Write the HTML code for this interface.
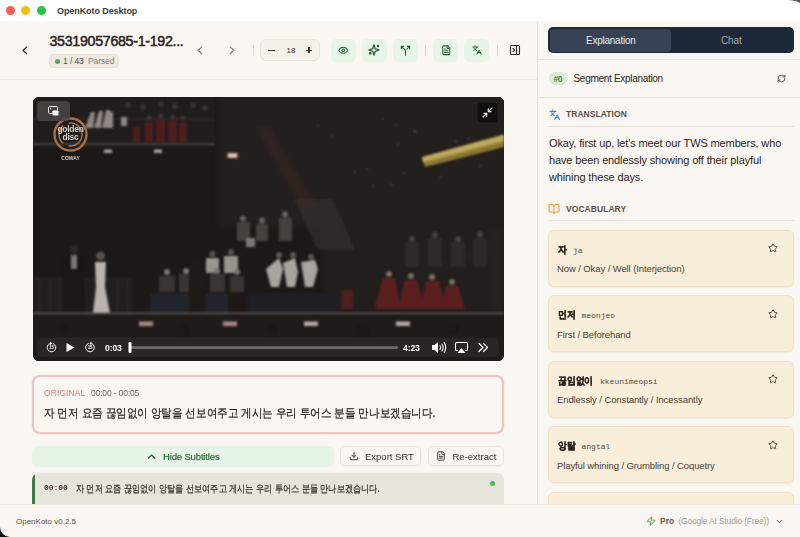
<!DOCTYPE html>
<html><head><meta charset="utf-8">
<style>
*{box-sizing:border-box;margin:0;padding:0}
html,body{width:800px;height:537px;overflow:hidden;background:#faf7f2}
body{font-family:"Liberation Sans",sans-serif;color:#2b2521;position:relative}
.a{position:absolute}
.nw{white-space:nowrap}
svg{display:block;overflow:visible}
.titlebar{left:0;top:0;width:800px;height:22px;background:linear-gradient(#fff 0,#fff 20px,#fcfbf8 21px,#faf7f2 22px)}
.tl{top:6px;width:9px;height:9px;border-radius:50%}
.title{left:57px;top:6px;font-size:9px;font-weight:bold;color:#3b3b3b;letter-spacing:-0.08px}
.bd{background:#e8e3db}
.gbtn{top:39px;width:25px;height:23px;border-radius:5px;background:#e6f5e8}
.gbtn svg{position:absolute;left:6.5px;top:5.5px}
.sep{top:45px;width:1px;height:11px;background:#dcd6ce}
.card{left:548px;width:246px;height:57px;background:#f9eed9;border:1px solid #f0e1c8;box-shadow:0 1px 1.5px rgba(120,90,40,0.08);border-radius:6px}
.kw{left:9px;top:12.2px;font-size:10px;font-weight:bold;color:#2a211c;-webkit-text-stroke:0.3px #2a211c;transform:scaleX(0.88);transform-origin:0 0}
.rom{top:15.2px;font-family:"Liberation Mono",monospace;font-size:8px;color:#544a44}
.mean{left:8px;top:32.7px;font-size:9.5px;color:#4a3f38;letter-spacing:-0.1px}
.star{left:218.6px;top:12.6px}
.sech{font-size:8.5px;font-weight:bold;color:#5e4e44;letter-spacing:0.05px}
</style></head><body>

<!-- title bar -->
<div class="a titlebar">
  <div class="a tl" style="left:6px;background:#f45b5d"></div>
  <div class="a tl" style="left:21px;background:#f6bf15"></div>
  <div class="a tl" style="left:37px;background:#27c444"></div>
  <div class="a title nw">OpenKoto Desktop</div>
</div>

<!-- header -->
<svg class="a" style="left:21px;top:45px" width="8" height="11" viewBox="0 0 8 11"><path d="M5.5 2.3 L2 5.4 L5.5 8.5" fill="none" stroke="#2e2a27" stroke-width="1.3" stroke-linecap="round" stroke-linejoin="round"/></svg>
<div class="a nw" style="left:49.5px;top:33.2px;font-size:14.2px;color:#2a2320;letter-spacing:-0.28px;-webkit-text-stroke:0.5px #2a2320">35319057685-1-192...</div>
<div class="a" style="left:49px;top:54px;width:70px;height:14px;border-radius:4px;background:#efe9e1;border:1px solid #e8e1d7"></div>
<div class="a" style="left:55px;top:59px;width:5px;height:5px;border-radius:50%;background:#5fa46a"></div>
<div class="a nw" style="left:63px;top:56px;font-size:8.5px;color:#5a5048;letter-spacing:-0.1px">1 / 43 <span style="color:#8a8078;margin-left:2px">Parsed</span></div>

<svg class="a" style="left:196px;top:45px" width="8" height="11" viewBox="0 0 8 11"><path d="M5.6 2.1 L2.1 5.3 L5.6 8.5" fill="none" stroke="#857d76" stroke-width="1.2" stroke-linecap="round" stroke-linejoin="round"/></svg>
<svg class="a" style="left:228px;top:45px" width="8" height="11" viewBox="0 0 8 11"><path d="M2.2 2.1 L5.7 5.3 L2.2 8.5" fill="none" stroke="#857d76" stroke-width="1.2" stroke-linecap="round" stroke-linejoin="round"/></svg>
<div class="a sep" style="left:253px"></div>

<div class="a" style="left:260px;top:39.2px;width:59.6px;height:22px;border-radius:6px;background:#f4f0ea;border:1px solid #e8e2d9"></div>
<div class="a" style="left:268.3px;top:49.7px;width:6.5px;height:1.2px;background:#3e3631"></div>
<div class="a nw" style="left:286.6px;top:45.5px;font-size:8px;color:#3e3631;letter-spacing:0px">18</div>
<div class="a" style="left:306px;top:49.7px;width:6px;height:1.2px;background:#3e3631"></div>
<div class="a" style="left:308.4px;top:47.2px;width:1.2px;height:6px;background:#3e3631"></div>

<div class="a gbtn" style="left:331px"><svg style="left:7.3px;top:6.3px" width="10.5" height="10.5" viewBox="0 0 24 24" fill="none" stroke="#2f5e35" stroke-width="2.4" stroke-linecap="round" stroke-linejoin="round"><path d="M2.062 12.348a1 1 0 0 1 0-.696 10.75 10.75 0 0 1 19.876 0 1 1 0 0 1 0 .696 10.75 10.75 0 0 1-19.876 0"/><circle cx="12" cy="12" r="3"/></svg></div>
<div class="a gbtn" style="left:362px"><svg style="left:6px;top:5.2px" width="12" height="12" viewBox="0 0 24 24" fill="none" stroke="#2f5e35" stroke-width="2.5" stroke-linecap="round" stroke-linejoin="round"><path d="M9.937 15.5A2 2 0 0 0 8.5 14.063l-6.135-1.582a.5.5 0 0 1 0-.962L8.5 9.936A2 2 0 0 0 9.937 8.5l1.582-6.135a.5.5 0 0 1 .963 0L14.063 8.5A2 2 0 0 0 15.5 9.937l6.135 1.581a.5.5 0 0 1 0 .964L15.5 14.063a2 2 0 0 0-1.437 1.437l-1.582 6.135a.5.5 0 0 1-.963 0z"/><circle cx="20" cy="4" r="1.3" fill="#2f5e35"/><circle cx="4.5" cy="18.5" r="1.5"/></svg></div>
<div class="a gbtn" style="left:393px"><svg style="left:7px;top:5.5px" width="11" height="11" viewBox="0 0 24 24" fill="none" stroke="#2f5e35" stroke-width="2.5" stroke-linecap="round" stroke-linejoin="round"><path d="M16 3h5v5"/><path d="M8 3H3v5"/><path d="M12 22v-8.3a4 4 0 0 0-1.172-2.872L3 3"/><path d="m15 9 6-6"/></svg></div>
<div class="a sep" style="left:425px"></div>
<div class="a gbtn" style="left:433px"><svg style="left:7.75px;top:5.65px" width="10.5" height="10.5" viewBox="0 0 24 24" fill="none" stroke="#2f5e35" stroke-width="2.4" stroke-linecap="round" stroke-linejoin="round"><path d="M15 2H6a2 2 0 0 0-2 2v16a2 2 0 0 0 2 2h12a2 2 0 0 0 2-2V7Z"/><path d="M14 2v4a2 2 0 0 0 2 2h4"/><path d="M10 9H8"/><path d="M16 13H8"/><path d="M16 17H8"/></svg></div>
<div class="a gbtn" style="left:464px"><svg style="left:8px;top:5.85px" width="10" height="10" viewBox="0 0 24 24" fill="none" stroke="#2f5e35" stroke-width="2.4" stroke-linecap="round" stroke-linejoin="round"><path d="m5 8 6 6"/><path d="m4 14 6-6 2-3"/><path d="M2 5h12"/><path d="M7 2h1"/><path d="m22 22-5-10-5 10"/><path d="M14 18h6"/></svg></div>
<div class="a sep" style="left:497px"></div>
<svg class="a" style="left:509px;top:44px" width="12" height="12" viewBox="0 0 24 24" fill="none" stroke="#2e2a27" stroke-width="2.2" stroke-linecap="round" stroke-linejoin="round"><rect width="18" height="18" x="3" y="3" rx="2"/><path d="M15 3v18"/><path d="m8 9 3 3-3 3"/></svg>

<div class="a bd" style="left:0;top:79px;width:537px;height:1px"></div>
<div class="a bd" style="left:537px;top:21px;width:1px;height:483px"></div>

<!-- VIDEO -->
<div class="a" style="left:33px;top:96.5px;width:471px;height:264px;border-radius:6px;overflow:hidden;background:#1c1816">
<svg width="471" height="264" viewBox="0 0 471 264">
  <defs>
    <filter id="bl" x="-5%" y="-5%" width="110%" height="110%" color-interpolation-filters="sRGB"><feGaussianBlur stdDeviation="0.9"/></filter>
    <filter id="bl2" x="-20%" y="-20%" width="140%" height="140%" color-interpolation-filters="sRGB"><feGaussianBlur stdDeviation="2.5"/></filter>
    <pattern id="dots" width="3" height="3" patternUnits="userSpaceOnUse"><rect width="3" height="3" fill="#2a2523"/><circle cx="1.5" cy="1.5" r="0.7" fill="#6b6460"/></pattern>
  </defs>
  <rect width="471" height="264" fill="#1c1816"/>
  <g filter="url(#bl2)">
    <rect x="185" y="-10" width="296" height="140" fill="#231f1c"/>
    <rect x="290" y="120" width="191" height="96" fill="#221e1b"/>
    <path d="M222 30 L236 30 L285 112 L270 112 Z" fill="#3a2622" opacity="0.55"/>
    <path d="M380 175 L471 140 L471 150 L390 185 Z" fill="#26211f" opacity="0.8"/>
  </g>
  <g filter="url(#bl)">
  <!-- balcony -->
  <rect x="0" y="0" width="182" height="47" fill="#201c1a"/>
  <g fill="#2e2927"><rect x="0" y="21" width="182" height="2"/></g>
  <g fill="#3a3431"><circle cx="8" cy="12" r="3"/><circle cx="20" cy="10" r="3"/><circle cx="95" cy="8" r="3"/><circle cx="110" cy="10" r="3"/><circle cx="128" cy="7" r="3"/><circle cx="142" cy="9" r="3"/><circle cx="160" cy="8" r="3"/><circle cx="172" cy="11" r="3"/></g>
  <g fill="#8f8883"><path d="M52 31 L58 15 L62 15 L60 31 Z"/><path d="M61 31 L66 14 L70 14 L68 31 Z"/><path d="M69 31 L73 13 L77 13 L76 31 Z"/><rect x="75" y="15" width="5" height="16"/><rect x="88" y="20" width="6" height="9"/></g>
  <g fill="#4e1d1e"><rect x="112" y="25" width="8" height="20"/><rect x="123" y="23" width="9" height="22"/><rect x="135" y="24" width="9" height="21"/><rect x="146" y="25" width="8" height="20"/><rect x="100" y="30" width="7" height="15"/></g>
  <g fill="#3e3835"><circle cx="116" cy="21" r="2.5"/><circle cx="127.5" cy="19" r="2.5"/><circle cx="139.5" cy="20" r="2.5"/><circle cx="150" cy="21" r="2.5"/></g>
  <rect x="0" y="46.5" width="182" height="1.4" fill="#5c5550"/>
  <!-- lights -->
  <rect x="71" y="52.5" width="8" height="3.5" fill="#aaa29c"/>
  <rect x="121" y="52.5" width="8" height="3.5" fill="#aaa29c"/>
  <rect x="193" y="55" width="13" height="7" fill="#7a3a28" opacity="0.7"/>
  <rect x="195" y="56.5" width="9" height="4" fill="#e0d6d0"/>
  <!-- dotted mesh -->
  <path d="M262 103 L300 103 L322 152 L284 152 Z" fill="url(#dots)" opacity="0.7"/>
  <!-- gold beam -->
  <path d="M389 60 L471 37.5 L471 50 L392 70 Z" fill="#8d7733"/>
  <path d="M389 60 L471 37.5 L471 44 L390 65.5 Z" fill="#bda85e"/>
  <g fill="#9d9791"><circle cx="285.2" cy="29.1" r="0.55"/><circle cx="299.0" cy="38.3" r="0.55"/><circle cx="349.5" cy="21.5" r="0.55"/><circle cx="363.3" cy="27.6" r="0.55"/><circle cx="381.7" cy="34.6" r="0.9"/><circle cx="364.8" cy="47.5" r="0.55"/><circle cx="423.0" cy="44.4" r="0.55"/><circle cx="334.2" cy="72.0" r="0.55"/><circle cx="321.9" cy="75.1" r="0.55"/><circle cx="371.0" cy="76.6" r="0.55"/><circle cx="407.7" cy="79.7" r="0.55"/><circle cx="435.3" cy="41.4" r="0.55"/><circle cx="447.5" cy="68.9" r="0.55"/><circle cx="358.7" cy="87.3" r="0.55"/><circle cx="340.3" cy="88.9" r="0.55"/></g>
  <!-- middle seated (upper) -->
  <g fill="#46413d"><rect x="204" y="125" width="13" height="19"/><rect x="223" y="127" width="12" height="17"/><rect x="246" y="121" width="13" height="23"/></g>
  <g fill="#6a635e"><circle cx="210" cy="121.5" r="3"/><circle cx="229" cy="123.5" r="3"/><circle cx="252" cy="117.5" r="3"/></g>
  <!-- right dark suits -->
  <g fill="#2e2a28"><rect x="372" y="145" width="14" height="25"/><rect x="395" y="141" width="14" height="29"/><rect x="418" y="145" width="14" height="25"/><rect x="440" y="140" width="14" height="30"/></g>
  <g fill="#4a4440"><circle cx="379" cy="142" r="3"/><circle cx="402" cy="138" r="3"/><circle cx="425" cy="142" r="3"/><circle cx="447" cy="137" r="3"/></g>
  <!-- railing -->
  <g fill="#221e1c"><rect x="0" y="181" width="100" height="35"/></g>
  <g fill="#302b28"><rect x="6" y="181" width="1.2" height="35"/><rect x="16" y="181" width="1.2" height="35"/><rect x="26" y="181" width="1.2" height="35"/><rect x="84" y="181" width="1.2" height="35"/><rect x="94" y="181" width="1.2" height="35"/><rect x="0" y="181" width="100" height="1.2"/></g>
  <!-- navy chairs -->
  <rect x="117" y="196" width="78" height="20" fill="#22242c"/>
  <rect x="215" y="196" width="92" height="20" fill="#1f1e24"/>
  <!-- white shirts second row -->
  <g fill="#9a948f"><rect x="173" y="161" width="13" height="15"/><rect x="191" y="159" width="14" height="17"/></g>
  <g fill="#5a5450"><circle cx="179.5" cy="157" r="3"/><circle cx="198" cy="155" r="3"/></g>
  <!-- seated women -->
  <g fill="#3a3532"><rect x="126" y="179" width="16" height="16"/><rect x="146" y="177" width="14" height="18"/><rect x="177" y="177" width="15" height="18"/><rect x="197" y="179" width="14" height="16"/></g>
  <g fill="#7d7570"><circle cx="134" cy="175" r="3"/><circle cx="153" cy="174" r="3"/><circle cx="184" cy="174" r="3"/><circle cx="204" cy="175" r="3"/></g>
  <!-- dark standing figure -->
  <rect x="156" y="162" width="17" height="54" fill="#1d1917"/>
  <!-- white suits -->
  <g fill="#aaa49f"><path d="M233 172 L246 161 L250 172 L246 190 L238 190 Z"/><path d="M250 166 L262 161 L265 175 L262 190 L254 190 Z"/><path d="M268 165 L282 163 L285 172 L280 190 L272 190 Z"/></g>
  <g fill="#5e5854"><circle cx="246" cy="158" r="3"/><circle cx="260" cy="158" r="3"/><circle cx="278" cy="160" r="3"/></g>
  <rect x="213" y="141" width="9" height="9" fill="#7e7873"/>
  <!-- red group -->
  <g fill="#5c1f20"><path d="M343 206 L350 181 L362 181 L368 212 L343 212 Z"/><path d="M365 212 L372 183 L384 183 L392 212 Z"/><path d="M386 212 L393 184 L406 184 L414 212 Z"/><path d="M408 212 L413 189 L425 189 L432 212 Z"/></g>
  <g fill="#7a6e68"><circle cx="356" cy="177" r="3"/><circle cx="378" cy="179" r="3"/><circle cx="399" cy="180" r="3"/><circle cx="419" cy="185" r="3"/></g>
  <rect x="308" y="193" width="12" height="19" fill="#4e1f20"/>
  <!-- hosts -->
  <path d="M31 160 L50 160 L52 216 L30 216 Z" fill="#1a1614"/>
  <rect x="38" y="158" width="6" height="14" fill="#7a746f"/>
  <circle cx="41" cy="152" r="4" fill="#2e2926"/>
  <path d="M62 165 L73 165 L72 190 L77 216 L60 216 L63 190 Z" fill="#bab3ae"/>
  <circle cx="67.5" cy="159" r="4.5" fill="#5a524d"/>
  <!-- right column -->
  <rect x="456" y="130" width="15" height="86" fill="#24201e"/>
  <!-- stage edge -->
  <rect x="0" y="215.5" width="471" height="1.8" fill="#625c57"/>
  <rect x="0" y="217.3" width="471" height="47" fill="#1f1b19"/>
  <g fill="#1c1816" opacity="0.7"><circle cx="30" cy="232" r="6"/><circle cx="150" cy="234" r="7"/><circle cx="240" cy="233" r="6"/><circle cx="330" cy="234" r="7"/><circle cx="420" cy="232" r="6"/></g>
  <rect x="106" y="224.5" width="14" height="4.5" fill="#a58a84"/>
  <rect x="190" y="224.5" width="14" height="4.5" fill="#a58a84"/>
  <rect x="271" y="224.5" width="14" height="4.5" fill="#b5aaa4"/>
  <rect x="363" y="224.5" width="14" height="4.5" fill="#b5aaa4"/>
  </g>
  <!-- logo -->
  <g fill="none" stroke="#a3714a"><circle cx="37.5" cy="37.5" r="16" stroke-width="2.4"/><circle cx="37.5" cy="37.5" r="11.5" stroke-width="1.5" stroke-dasharray="20 6"/></g>
  <text x="37.5" y="35" font-family="Liberation Sans" font-size="8.5" font-weight="bold" fill="#d8d2cc" text-anchor="middle" letter-spacing="-0.3">golden</text>
  <text x="37.5" y="43" font-family="Liberation Sans" font-size="8.5" font-weight="bold" fill="#d8d2cc" text-anchor="middle" letter-spacing="-0.3">disc</text>
  <text x="37.5" y="63" font-family="Liberation Sans" font-size="5" font-weight="bold" fill="#cfcac5" text-anchor="middle">COWAY</text>
  <!-- control bar -->
  <rect x="4" y="240.5" width="462" height="19.5" rx="6" fill="#2b2725" opacity="0.9"/>
  <g fill="none" stroke="#f4f4f4" stroke-width="1">
    <path d="M17.2 246.4 A4.3 4.3 0 1 0 19.8 246.4"/>
    <path d="M55.7 246.4 A4.3 4.3 0 1 0 58.3 246.4"/>
  </g>
  <path d="M17 244.6 L19.2 246.4 L17 248.2 Z" fill="#f4f4f4"/>
  <path d="M58.5 244.6 L56.3 246.4 L58.5 248.2 Z" fill="#f4f4f4"/>
  <text x="18.5" y="252.4" font-family="Liberation Sans" font-size="4.6" font-weight="bold" fill="#f4f4f4" text-anchor="middle" letter-spacing="-0.2">15</text>
  <text x="57" y="252.4" font-family="Liberation Sans" font-size="4.6" font-weight="bold" fill="#f4f4f4" text-anchor="middle" letter-spacing="-0.2">15</text>
  <path d="M33.5 246 L41.5 250.5 L33.5 255 Z" fill="#fff"/>
  <text x="72" y="254" font-family="Liberation Sans" font-size="8.6" fill="#fff" font-weight="bold" letter-spacing="-0.1">0:03</text>
  <rect x="96" y="249.3" width="269" height="2.6" rx="1.3" fill="#6f6965"/>
  <rect x="95.5" y="245" width="3" height="11" rx="1.2" fill="#fff"/>
  <text x="370" y="254" font-family="Liberation Sans" font-size="8.6" fill="#fff" font-weight="bold" letter-spacing="-0.1">4:23</text>
  <g fill="#fff"><path d="M399 248 L401.5 248 L405 245 L405 256 L401.5 253 L399 253 Z"/></g>
  <g fill="none" stroke="#fff" stroke-width="1.1" stroke-linecap="round"><path d="M407 248.5 Q408.3 250.5 407 252.5"/><path d="M409 247 Q411.3 250.5 409 254"/><path d="M411.2 245.5 Q414.2 250.5 411.2 255.5"/></g>
  <g fill="none" stroke="#fff" stroke-width="1.1"><path d="M425 253.5 L423.5 253.5 Q422.5 253.5 422.5 252.5 L422.5 246.5 Q422.5 245.5 423.5 245.5 L433.5 245.5 Q434.5 245.5 434.5 246.5 L434.5 252.5 Q434.5 253.5 433.5 253.5 L432 253.5"/></g>
  <path d="M424.5 256 L428.5 251 L432.5 256 Z" fill="#fff"/>
  <g fill="none" stroke="#fff" stroke-width="1.2" stroke-linejoin="round" stroke-linecap="round"><path d="M446 246.5 L450 250.5 L446 254.5"/><path d="M450.5 246.5 L454.5 250.5 L450.5 254.5"/></g>
  <!-- PiP button -->
  <rect x="4" y="4" width="33" height="20" rx="4" fill="#4a4542" opacity="0.85"/>
  <g fill="none" stroke="#e9e9e9" stroke-width="1"><rect x="15.5" y="9.5" width="9" height="7" rx="1.3"/></g>
  <rect x="19.5" y="13.5" width="6" height="5" rx="0.8" fill="#fff"/>
  <circle cx="17.5" cy="11.5" r="0.8" fill="#fff"/>
  <!-- exit fullscreen -->
  <rect x="444.5" y="5.5" width="20" height="20" rx="4" fill="#0f0d0c" opacity="0.9"/>
  <g fill="none" stroke="#fff" stroke-width="1.1" stroke-linecap="round" stroke-linejoin="round"><path d="M459 11 L455.5 14.5"/><path d="M455.3 11.8 L455.3 14.7 L458.2 14.7"/><path d="M450 20 L453.5 16.5"/><path d="M450.8 16.3 L453.7 16.3 L453.7 19.2"/></g>
</svg>
</div>

<!-- ORIGINAL box -->
<div class="a" style="left:31.8px;top:374.9px;width:472.6px;height:59.3px;border:2px solid #f2c2c4;border-radius:8px;background:#faf7f2;box-shadow:0 0 0 0.6px rgba(200,190,180,0.25)"></div>
<div class="a nw" style="left:44px;top:387.6px;font-size:8.5px;color:#e2777c;letter-spacing:0.1px">ORIGINAL</div>
<div class="a nw" style="left:91px;top:387.6px;font-size:8.5px;color:#6f6660;letter-spacing:-0.15px">00:00 - 00:05</div>
<div class="a nw" style="left:44px;top:405px;font-size:12px;color:#2c2420;-webkit-text-stroke:0.25px #2c2420;transform:scaleX(0.88);transform-origin:0 0">자 먼저 요즘 끊임없이 앙탈을 선보여주고 게시는 우리 투어스 분들 만나보겠습니다.</div>

<!-- Buttons row -->
<div class="a" style="left:32px;top:446px;width:302px;height:21px;border-radius:6px;background:#e6f4e8"></div>
<svg class="a" style="left:146px;top:452px" width="11" height="9" viewBox="0 0 11 9"><path d="M2.3 6.4 L5.6 3 L8.9 6.4" fill="none" stroke="#2a6232" stroke-width="1.3" stroke-linecap="round" stroke-linejoin="round"/></svg>
<div class="a nw" style="left:163px;top:450.5px;font-size:9.5px;color:#2a6232;letter-spacing:-0.15px;-webkit-text-stroke:0.15px #2a6232">Hide Subtitles</div>

<div class="a" style="left:340.3px;top:446.2px;width:80.7px;height:20px;border-radius:5px;background:#faf7f2;border:1px solid #ebe5dd;box-shadow:0 0.5px 1px rgba(120,100,80,0.06)"></div>
<svg class="a" style="left:349px;top:451px" width="10" height="10" viewBox="0 0 24 24" fill="none" stroke="#3a322d" stroke-width="2.3" stroke-linecap="round" stroke-linejoin="round"><path d="M12 15V3"/><path d="M21 15v4a2 2 0 0 1-2 2H5a2 2 0 0 1-2-2v-4"/><path d="m7 10 5 5 5-5"/></svg>
<div class="a nw" style="left:365px;top:450.5px;font-size:9.5px;color:#342c28;letter-spacing:0px">Export SRT</div>

<div class="a" style="left:427.8px;top:446.2px;width:76.6px;height:20px;border-radius:5px;background:#faf7f2;border:1px solid #ebe5dd;box-shadow:0 0.5px 1px rgba(120,100,80,0.06)"></div>
<svg class="a" style="left:436px;top:451px" width="10" height="10" viewBox="0 0 24 24" fill="none" stroke="#3a322d" stroke-width="2.2" stroke-linecap="round" stroke-linejoin="round"><path d="M15 2H6a2 2 0 0 0-2 2v16a2 2 0 0 0 2 2h12a2 2 0 0 0 2-2V7Z"/><path d="M14 2v4a2 2 0 0 0 2 2h4"/><path d="M10 9H8"/><path d="M16 13H8"/><path d="M16 17H8"/></svg>
<div class="a nw" style="left:452.5px;top:450.5px;font-size:9.5px;color:#342c28;letter-spacing:0px">Re-extract</div>

<!-- subtitle item -->
<div class="a" style="left:32px;top:473px;width:472px;height:40px;border-radius:7px;background:#e7e4dc;overflow:hidden">
  <div class="a" style="left:0;top:0;width:2.5px;height:40px;background:#3c7a44"></div>
</div>
<div class="a nw" style="left:44px;top:483px;font-family:'Liberation Mono',monospace;font-size:8px;font-weight:bold;color:#5c4b41;letter-spacing:-0.05px">00:00</div>
<div class="a nw" style="left:75.5px;top:481.8px;font-size:10px;color:#332b27;-webkit-text-stroke:0.2px #332b27;transform:scaleX(0.82);transform-origin:0 0">자 먼저 요즘 끊임없이 앙탈을 선보여주고 게시는 우리 투어스 분들 만나보겠습니다.</div>
<div class="a" style="left:490px;top:481px;width:5px;height:5px;border-radius:50%;background:#3ec25a"></div>

<!-- RIGHT PANE -->
<div class="a" style="left:548px;top:27px;width:246px;height:26px;border-radius:5px;background:#1e2938"></div>
<div class="a" style="left:549.5px;top:28.5px;width:121.5px;height:23px;border-radius:4px;background:#374354"></div>
<div class="a nw" style="left:586px;top:34.5px;font-size:10px;color:#e8ecf1;letter-spacing:-0.25px">Explanation</div>
<div class="a nw" style="left:721px;top:34.5px;font-size:10px;color:#a0a8b3;letter-spacing:-0.1px">Chat</div>
<div class="a bd" style="left:538px;top:59px;width:262px;height:1px"></div>

<div class="a" style="left:549px;top:72px;width:19px;height:12.5px;border-radius:6px;background:#dbe9d7"></div>
<div class="a nw" style="left:553.5px;top:73.5px;font-size:8.5px;font-weight:bold;color:#3f7f49;letter-spacing:-0.4px">#0</div>
<div class="a nw" style="left:573.5px;top:72.5px;font-size:10px;color:#2b2521;letter-spacing:-0.3px">Segment Explanation</div>
<svg class="a" style="left:776.5px;top:73.5px" width="9" height="9" viewBox="0 0 24 24" fill="none" stroke="#3a322d" stroke-width="2.2" stroke-linecap="round" stroke-linejoin="round"><path d="M3 12a9 9 0 0 1 9-9 9.75 9.75 0 0 1 6.74 2.74L21 8"/><path d="M21 3v5h-5"/><path d="M21 12a9 9 0 0 1-9 9 9.75 9.75 0 0 1-6.74-2.74L3 16"/><path d="M8 16H3v5"/></svg>
<div class="a bd" style="left:538px;top:97px;width:262px;height:1px"></div>

<svg class="a" style="left:548.9px;top:108.7px" width="11.5" height="11.5" viewBox="0 0 24 24" fill="none" stroke="#4a80e6" stroke-width="2.2" stroke-linecap="round" stroke-linejoin="round"><path d="m5 8 6 6"/><path d="m4 14 6-6 2-3"/><path d="M2 5h12"/><path d="M7 2h1"/><path d="m22 22-5-10-5 10"/><path d="M14 18h6"/></svg>
<div class="a nw sech" style="left:566px;top:109.3px">TRANSLATION</div>
<div class="a bd" style="left:548px;top:126px;width:246px;height:1px"></div>
<div class="a" style="left:549px;top:135.3px;width:240px;font-size:11px;line-height:17.1px;color:#2b2521;letter-spacing:-0.13px">Okay, first up, let's meet our TWS members, who have been endlessly showing off their playful whining these days.</div>

<svg class="a" style="left:548px;top:203px" width="12" height="12" viewBox="0 0 24 24" fill="none" stroke="#e8a33a" stroke-width="2.2" stroke-linecap="round" stroke-linejoin="round"><path d="M12 7v14"/><path d="M3 18a1 1 0 0 1-1-1V4a1 1 0 0 1 1-1h5a4 4 0 0 1 4 4 4 4 0 0 1 4-4h5a1 1 0 0 1 1 1v13a1 1 0 0 1-1 1h-6a3 3 0 0 0-3 3 3 3 0 0 0-3-3z"/></svg>
<div class="a nw sech" style="left:566px;top:204px">VOCABULARY</div>
<div class="a bd" style="left:548px;top:220px;width:246px;height:1px"></div>

<div class="a card" style="top:229.5px">
  <div class="a nw kw">자</div><div class="a nw rom" style="left:24px">ja</div>
  <div class="a nw mean">Now / Okay / Well (Interjection)</div>
  <svg class="a star" width="10" height="10" viewBox="0 0 24 24" fill="none" stroke="#4a3f38" stroke-width="2.2" stroke-linejoin="round"><path d="M11.525 2.295a.53.53 0 0 1 .95 0l2.31 4.679a2.123 2.123 0 0 0 1.595 1.16l5.166.756a.53.53 0 0 1 .294.904l-3.736 3.638a2.123 2.123 0 0 0-.611 1.878l.882 5.14a.53.53 0 0 1-.771.56l-4.618-2.428a2.122 2.122 0 0 0-1.973 0L6.396 21.01a.53.53 0 0 1-.77-.56l.881-5.139a2.122 2.122 0 0 0-.611-1.879L2.16 9.795a.53.53 0 0 1 .294-.906l5.165-.755a2.122 2.122 0 0 0 1.597-1.16z"/></svg>
</div>
<div class="a card" style="top:295.1px">
  <div class="a nw kw">먼저</div><div class="a nw rom" style="left:32.5px">meonjeo</div>
  <div class="a nw mean">First / Beforehand</div>
  <svg class="a star" width="10" height="10" viewBox="0 0 24 24" fill="none" stroke="#4a3f38" stroke-width="2.2" stroke-linejoin="round"><path d="M11.525 2.295a.53.53 0 0 1 .95 0l2.31 4.679a2.123 2.123 0 0 0 1.595 1.16l5.166.756a.53.53 0 0 1 .294.904l-3.736 3.638a2.123 2.123 0 0 0-.611 1.878l.882 5.14a.53.53 0 0 1-.771.56l-4.618-2.428a2.122 2.122 0 0 0-1.973 0L6.396 21.01a.53.53 0 0 1-.77-.56l.881-5.139a2.122 2.122 0 0 0-.611-1.879L2.16 9.795a.53.53 0 0 1 .294-.906l5.165-.755a2.122 2.122 0 0 0 1.597-1.16z"/></svg>
</div>
<div class="a card" style="top:360.7px">
  <div class="a nw kw">끊임없이</div><div class="a nw rom" style="left:51px">kkeunimeopsi</div>
  <div class="a nw mean">Endlessly / Constantly / Incessantly</div>
  <svg class="a star" width="10" height="10" viewBox="0 0 24 24" fill="none" stroke="#4a3f38" stroke-width="2.2" stroke-linejoin="round"><path d="M11.525 2.295a.53.53 0 0 1 .95 0l2.31 4.679a2.123 2.123 0 0 0 1.595 1.16l5.166.756a.53.53 0 0 1 .294.904l-3.736 3.638a2.123 2.123 0 0 0-.611 1.878l.882 5.14a.53.53 0 0 1-.771.56l-4.618-2.428a2.122 2.122 0 0 0-1.973 0L6.396 21.01a.53.53 0 0 1-.77-.56l.881-5.139a2.122 2.122 0 0 0-.611-1.879L2.16 9.795a.53.53 0 0 1 .294-.906l5.165-.755a2.122 2.122 0 0 0 1.597-1.16z"/></svg>
</div>
<div class="a card" style="top:426.3px">
  <div class="a nw kw">앙탈</div><div class="a nw rom" style="left:32.5px">angtal</div>
  <div class="a nw mean">Playful whining / Grumbling / Coquetry</div>
  <svg class="a star" width="10" height="10" viewBox="0 0 24 24" fill="none" stroke="#4a3f38" stroke-width="2.2" stroke-linejoin="round"><path d="M11.525 2.295a.53.53 0 0 1 .95 0l2.31 4.679a2.123 2.123 0 0 0 1.595 1.16l5.166.756a.53.53 0 0 1 .294.904l-3.736 3.638a2.123 2.123 0 0 0-.611 1.878l.882 5.14a.53.53 0 0 1-.771.56l-4.618-2.428a2.122 2.122 0 0 0-1.973 0L6.396 21.01a.53.53 0 0 1-.77-.56l.881-5.139a2.122 2.122 0 0 0-.611-1.879L2.16 9.795a.53.53 0 0 1 .294-.906l5.165-.755a2.122 2.122 0 0 0 1.597-1.16z"/></svg>
</div>
<div class="a card" style="top:491.9px"></div>

<!-- FOOTER -->
<div class="a" style="left:0;top:504px;width:800px;height:33px;background:#faf7f2;border-top:1px solid #e8e3db"></div>
<div class="a nw" style="left:16px;top:516.5px;font-size:8px;color:#5a5048;letter-spacing:0px">OpenKoto v0.2.5</div>
<svg class="a" style="left:645.5px;top:516px" width="10" height="10" viewBox="0 0 24 24" fill="none" stroke="#4f9a5a" stroke-width="2.3" stroke-linecap="round" stroke-linejoin="round"><path d="M4 14a1 1 0 0 1-.78-1.63l9.9-10.2a.5.5 0 0 1 .86.46l-1.92 6.02A1 1 0 0 0 13 10h7a1 1 0 0 1 .78 1.63l-9.9 10.2a.5.5 0 0 1-.86-.46l1.92-6.02A1 1 0 0 0 11 14z"/></svg>
<div class="a nw" style="left:660px;top:516px;font-size:8.5px;font-weight:bold;color:#6a5b50">Pro</div>
<div class="a nw" style="left:678.4px;top:516px;font-size:8.5px;color:#a59c94;letter-spacing:-0.18px">(Google AI Studio (Free))</div>
<svg class="a" style="left:774.5px;top:517px" width="9" height="9" viewBox="0 0 24 24" fill="none" stroke="#4a3f38" stroke-width="2.6" stroke-linecap="round" stroke-linejoin="round"><path d="m6 9 6 6 6-6"/></svg>

<svg class="a" style="left:0;top:0" width="800" height="537" viewBox="0 0 800 537">
  <path d="M0 527 A10 10 0 0 0 10 537 L0 537 Z" fill="#111"/>
  <path d="M788 0 Q797 0.5 800 3 L800 0 Z" fill="#222" opacity="0.75"/>
</svg>
</body></html>
